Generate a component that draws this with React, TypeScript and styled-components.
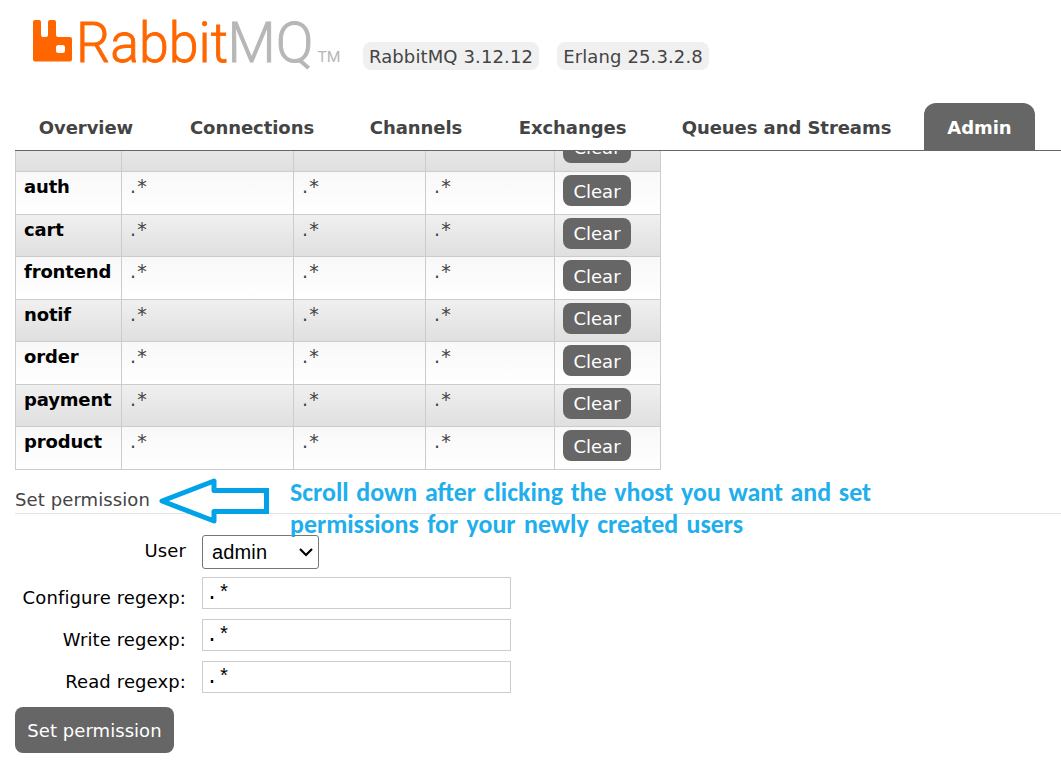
import React from "react";
import styled, { createGlobalStyle } from "styled-components";

const Global = createGlobalStyle`
  * { box-sizing: border-box; }
  html, body { margin: 0; background: #fff; overflow: hidden; }
  body { font: 18px/22px Verdana, "DejaVu Sans", sans-serif; color: #444; }
`;

const Page = styled.div`
  width: 1061px;
  height: 765px;
  display: flex;
  flex-direction: column;
  overflow: hidden;
  padding-left: 15px;
`;

const Header = styled.header`
  height: 103px;
  flex: none;
  display: flex;
  align-items: flex-start;
`;

const Logo = styled.svg`
  width: 330px;
  height: 80px;
  flex: none;
  display: block;
`;

const Versions = styled.div`
  display: flex;
  gap: 18px;
  margin: 42px 0 0 18px;
`;

const Version = styled.span<{ $w: number }>`
  width: ${(p) => p.$w}px;
  height: 28px;
  line-height: 29px;
  text-align: center;
  white-space: nowrap;
  letter-spacing: 0.12px;
  background: #f0f0f0;
  border-radius: 8px;
`;

const Tabs = styled.nav`
  height: 48px;
  flex: none;
  display: flex;
  border-bottom: 1px solid #666;
`;

const Tab = styled.a<{ $before: number; $w: number; $active?: boolean }>`
  margin-left: ${(p) => p.$before}px;
  width: ${(p) => p.$w}px;
  height: 47px;
  line-height: 49px;
  flex: none;
  text-align: center;
  white-space: nowrap;
  font-weight: bold;
  letter-spacing: -0.06px;
  color: ${(p) => (p.$active ? "#fff" : "#444")};
  background: ${(p) => (p.$active ? "#666" : "transparent")};
  border-radius: 12px 12px 0 0;
`;

const TableView = styled.div`
  height: 319px;
  flex: none;
  overflow: hidden;
  display: flex;
  flex-direction: column;
  justify-content: flex-end;
`;

const Table = styled.table`
  width: 646px;
  flex: none;
  table-layout: fixed;
  border-collapse: separate;
  border-spacing: 0;
  border-left: 1px solid #ccc;
`;

const Row = styled.tr<{ $h: number; $alt: boolean }>`
  height: ${(p) => p.$h}px;
  background: ${(p) => (p.$alt ? "linear-gradient(#f0f0f0, #dfdfdf)" : "linear-gradient(#f8f8f8, #fff)")};
`;

const Cell = styled.td`
  padding: 4px 8px 0;
  vertical-align: top;
  border-right: 1px solid #ccc;
  border-bottom: 1px solid #ccc;
  overflow: hidden;
  white-space: nowrap;
`;

const UserCell = styled(Cell)`
  font-weight: bold;
  letter-spacing: -0.15px;
  color: #000;
`;

const PatternCell = styled(Cell)`
  padding-top: 3px;
  letter-spacing: 1.2px;
  font-size: 19px;
`;

const ActionCell = styled(Cell)`
  padding-top: 3px;
`;

const Button = styled.button<{ $large?: boolean; $raised?: boolean }>`
  display: block;
  width: ${(p) => (p.$large ? 159 : 68)}px;
  height: ${(p) => (p.$large ? 46 : 31)}px;
  padding: ${(p) => (p.$raised ? 0 : 2)}px 0 0;
  flex: none;
  border: 0;
  border-radius: 8px;
  background: #666;
  color: #fff;
  font: inherit;
  letter-spacing: ${(p) => (p.$large ? 0.05 : 0)}px;
  white-space: nowrap;
`;

const Heading = styled.h2`
  position: relative;
  height: 44px;
  margin: 0 0 21px;
  padding-top: 19px;
  flex: none;
  font: inherit;
  letter-spacing: 0.1px;
  border-bottom: 1px solid #e4e4e4;
`;

const Arrow = styled.svg`
  position: absolute;
  left: 143px;
  top: 7px;
  width: 114px;
  height: 48px;
`;

const Note = styled.div`
  position: absolute;
  z-index: 1;
  left: 275px;
  top: 6px;
  font: bold 25.9px/32px Calibri, Carlito, "Open Sans", sans-serif;
  letter-spacing: 0;
  color: #20aeec;
  white-space: nowrap;
`;

const NoteLine = styled.div<{ $w: number }>`
  width: ${(p) => p.$w}px;
  text-align: justify;
  text-align-last: justify;
`;

const Form = styled.form`
  display: flex;
  flex-direction: column;
  align-items: flex-start;
`;

const Field = styled.label<{ $h: number; $gap: number }>`
  display: flex;
  height: ${(p) => p.$h}px;
  margin-bottom: ${(p) => p.$gap}px;
  color: #000;
`;

const Label = styled.span<{ $top: number }>`
  width: 171px;
  margin-right: 16px;
  padding-top: ${(p) => p.$top}px;
  text-align: right;
  letter-spacing: 0.12px;
  white-space: nowrap;
`;

const Select = styled.span`
  width: 117px;
  height: 34px;
  display: flex;
  align-items: center;
  justify-content: space-between;
  padding: 0 5px 0 9px;
  border: 1px solid #767676;
  border-radius: 3px;
  font: 20px/32px "Liberation Sans", Arial, sans-serif;
  letter-spacing: 0.15px;
`;

const Input = styled.input`
  width: 309px;
  height: 32px;
  padding: 0 3px;
  border: 1px solid #ccc;
  font: 20px/30px "Liberation Mono", monospace;
  color: #000;
  background: #fff;
`;

const users = [
  { name: "", height: 43 },
  { name: "auth", height: 43 },
  { name: "cart", height: 42 },
  { name: "frontend", height: 43 },
  { name: "notif", height: 42 },
  { name: "order", height: 43 },
  { name: "payment", height: 42 },
  { name: "product", height: 43 },
];

const fields = ["Configure regexp:", "Write regexp:", "Read regexp:"];

function RabbitLogo() {
  return (
    <Logo viewBox="15 0 330 80">
      <path
        fill="#f60"
        fillRule="evenodd"
        d="M35 20h4q2 0 2 2v13q0 2 2 2h3q2 0 2-2V22q0-2 2-2h4q2 0 2 2v13q0 2 2 2h12q2 0 2 2v20.500q0 2-2 2H35q-2 0-2-2V22q0-2 2-2zM58.500 45q-2.500 0-2.500 2.500v3q0 2.500 2.500 2.500h4q2.500 0 2.500-2.500v-3q0-2.500-2.500-2.500z"
      />
      <g fontFamily="Roboto" fontWeight="300" fontSize="56" strokeWidth="0.900">
        <text x="76" y="61.500" fill="#f60" stroke="#f60" textLength="152" lengthAdjust="spacingAndGlyphs">Rabbit</text>
        <text x="227.500" y="61.500" fill="#b7b7b7" stroke="#b7b7b7" textLength="86" lengthAdjust="spacingAndGlyphs">MQ</text>
      </g>
      <text x="317.500" y="61.500" fontFamily="Roboto" fontSize="15.500" fill="#b7b7b7" textLength="23" lengthAdjust="spacingAndGlyphs">TM</text>
    </Logo>
  );
}

export default function App() {
  return (
    <>
      <Global />
      <Page>
        <Header>
          <RabbitLogo />
          <Versions>
            <Version $w={176}>RabbitMQ 3.12.12</Version>
            <Version $w={152}>Erlang 25.3.2.8</Version>
          </Versions>
        </Header>
        <Tabs>
          <Tab $before={22} $w={98}>Overview</Tab>
          <Tab $before={54} $w={126}>Connections</Tab>
          <Tab $before={54} $w={94}>Channels</Tab>
          <Tab $before={55} $w={109}>Exchanges</Tab>
          <Tab $before={54} $w={211}>Queues and Streams</Tab>
          <Tab $before={32} $w={111} $active>Admin</Tab>
        </Tabs>
        <TableView>
          <Table>
            <colgroup>
              <col width={106} />
              <col width={172} />
              <col width={132} />
              <col width={129} />
              <col width={106} />
            </colgroup>
            <tbody>
              {users.map((user, i) => (
                <Row key={i} $h={user.height} $alt={i % 2 === 0}>
                  <UserCell>{user.name}</UserCell>
                  <PatternCell>{user.name && ".*"}</PatternCell>
                  <PatternCell>{user.name && ".*"}</PatternCell>
                  <PatternCell>{user.name && ".*"}</PatternCell>
                  <ActionCell><Button $raised={i % 2 === 0}>Clear</Button></ActionCell>
                </Row>
              ))}
            </tbody>
          </Table>
        </TableView>
        <Heading>
          Set permission
          <Arrow viewBox="158 477 114 48">
            <path d="M162 501L214 481V490.500H266.500V511.500H214V521Z" fill="#fff" stroke="#00a2e8" strokeWidth="5" strokeLinejoin="round" />
            <path d="M250 490.500H266.500V511.500H250" fill="none" stroke="#00a2e8" strokeWidth="5" />
          </Arrow>
          <Note>
            <NoteLine $w={581}>Scroll down after clicking the vhost you want and set</NoteLine>
            <NoteLine $w={453}>permissions for your newly created users</NoteLine>
          </Note>
        </Heading>
        <Form>
          <Field $h={34} $gap={8}>
            <Label $top={5}>User</Label>
            <Select>
              admin
              <svg width="14" height="10" viewBox="0 0 14 10">
                <path d="M1 2L7 8L13 2" fill="none" stroke="#000" strokeWidth="2.200" />
              </svg>
            </Select>
          </Field>
          {fields.map((label, i) => (
            <Field key={label} $h={32} $gap={i === 2 ? 14 : 10}>
              <Label $top={10}>{label}</Label>
              <Input defaultValue=".*" />
            </Field>
          ))}
          <Button type="button" $large>Set permission</Button>
        </Form>
      </Page>
    </>
  );
}
